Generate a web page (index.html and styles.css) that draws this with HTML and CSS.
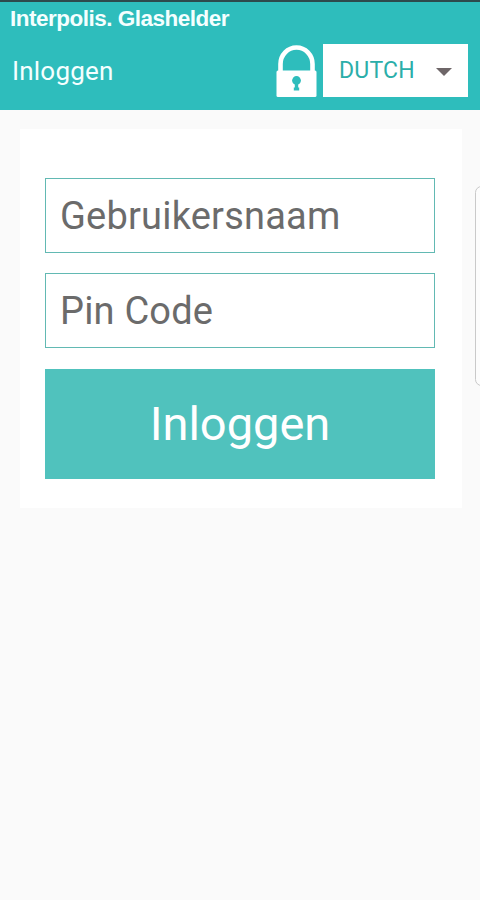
FILE: index.html
```
<!DOCTYPE html>
<html lang="nl">

<head>
    <meta charset="utf-8">
    <meta name="viewport" content="width=device-width,initial-scale=1.0">
    <title>Inloggen</title>
    <link rel="stylesheet" href="styles.css">
</head>

<body>
    <header class="header">
        <div class="brand">Interpolis. Glashelder</div>
        <div class="toolbar">
            <h1 class="title">Inloggen</h1>
            <svg class="lock" width="42" height="54" viewBox="0 0 42 54">
                <path d="M4.500 27V20a16 16.500 0 0 1 32 0V27" fill="none" stroke="#fff" stroke-width="4.600" />
                <rect x="0.500" y="26.500" width="40" height="26.500" rx="1.500" fill="#fff" />
                <circle cx="20.500" cy="36.500" r="4.400" fill="#2ebdbc" />
                <path d="M18.800 38h3.400v5.500h1v3h-5.400v-3h1z" fill="#2ebdbc" />
            </svg>
            <button class="language" type="button">
                <span class="language-name">DUTCH</span>
                <span class="arrow"></span>
            </button>
        </div>
    </header>

    <main class="card">
        <form action="" class="form">
            <input class="input" type="text" placeholder="Gebruikersnaam" autocomplete="off">
            <input class="input" type="password" placeholder="Pin Code" autocomplete="off">
            <button class="login-button" type="submit">Inloggen</button>
        </form>
    </main>

    <!-- handle of the phone's edge panel -->
    <div class="edge-panel"></div>
</body>

</html>
```

FILE: styles.css
```
* {
    box-sizing: border-box;
}

body {
    margin: 0;
    height: 100vh;
    overflow: hidden;
    position: relative;
    font-family: Roboto, "Liberation Sans", sans-serif;
    background: #fafafa;
}

.header {
    height: 110px;
    padding: 4px 12px 0;
    border-top: 2px solid #2d4a4c;
    background: #2ebdbc;
    color: #f4ffff;
}

.brand {
    height: 38px;
    margin-left: -2px;
    font: bold 22.5px/25px "Liberation Sans", Arial, sans-serif;
    letter-spacing: -0.5px;
    white-space: nowrap;
}

.toolbar {
    display: flex;
    height: 54px;
}

.title {
    margin: 0;
    flex-grow: 1;
    font-size: 26px;
    font-weight: 400;
    line-height: 54px;
    letter-spacing: 0.2px;
}

.lock {
    margin-right: 5px;
}

.language {
    display: flex;
    align-items: center;
    justify-content: space-between;
    width: 145px;
    height: 53px;
    padding: 0 16px;
    border: none;
    background: #fff;
    color: #2baea9;
    font-family: inherit;
    font-size: 23px;
    letter-spacing: 0.2px;
}

.arrow {
    border: 8px solid transparent;
    border-top-color: #6e6668;
    border-bottom: none;
    margin-top: 3px;
}

.card {
    width: 442px;
    height: 379px;
    margin: 19px 0 0 20px;
    padding: 49px 27px 0 25px;
    background: #fff;
}

.form {
    display: flex;
    flex-direction: column;
    gap: 20px;
}

.input {
    width: 100%;
    height: 75px;
    padding: 0 14px;
    border: 1px solid #62b9b3;
    border-radius: 0;
    background: #fff;
    font-family: inherit;
    font-size: 38px;
    letter-spacing: 0.2px;
    outline: none;
}

.input::placeholder {
    color: #6b6b6b;
}

.login-button {
    height: 110px;
    margin-top: 1px;
    padding: 0 0 2px;
    border: none;
    background: #50c2bd;
    color: #fff;
    font-family: inherit;
    font-size: 47px;
}

.edge-panel {
    position: absolute;
    top: 186px;
    right: -8px;
    width: 13px;
    height: 200px;
    border: 1px solid #c9c9c9;
    border-radius: 8px;
    background: #fcfcfc;
}
```
